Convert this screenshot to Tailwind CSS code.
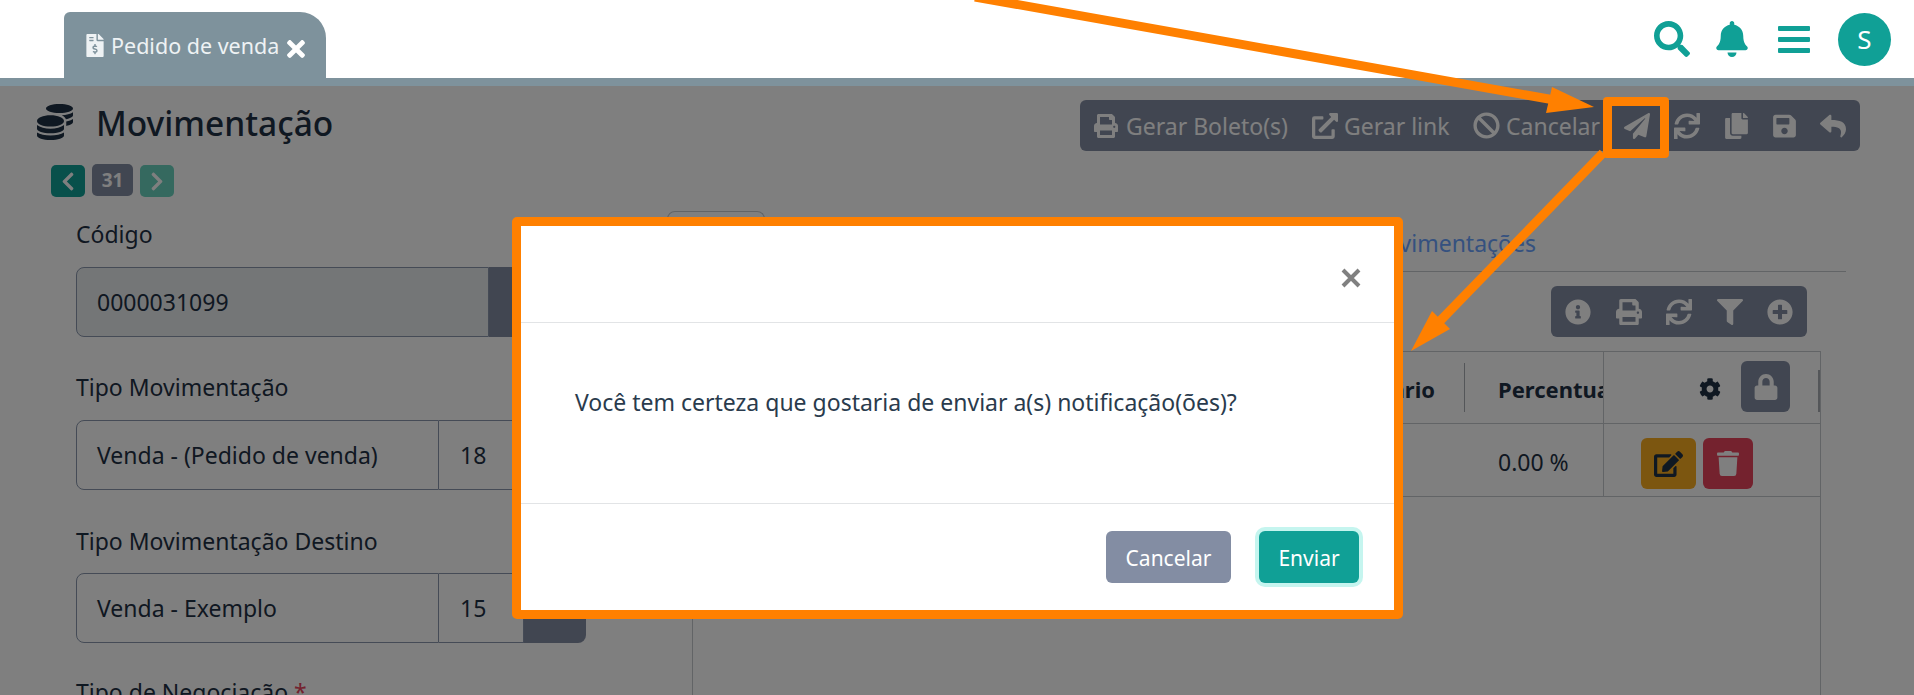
<!DOCTYPE html>
<html lang="pt-BR">

<head>
    <meta charset="UTF-8">
    <meta name="viewport" content="width=device-width, initial-scale=1.0">
    <title>Pedido de venda</title>
    <script src="https://cdn.jsdelivr.net/npm/@tailwindcss/browser@4"></script>
</head>

<body class="relative w-[1914px] h-[695px] overflow-hidden bg-white font-['Noto_Sans',sans-serif] text-[#1f3044]">

    <!-- Topo -->
    <header class="flex justify-between h-[78px] pl-[64px] pr-[23px]">
        <div class="flex items-center gap-[7px] w-[262px] h-[66px] mt-[12px] pl-[22px] pt-[3px] bg-[#7e929c] rounded-tl-[6px] rounded-tr-[26px] text-[#eef2f4] text-[21.5px]">
            <svg class="w-[18px] h-[23px] fill-current -mt-[2px]" viewBox="0 0 384 512"><path d="M377 105L279.1 7c-4.5-4.5-10.6-7-17-7H256v128h128v-6.1c0-6.3-2.5-12.4-7-16.9zm-153 31V0H24C10.7 0 0 10.7 0 24v464c0 13.3 10.7 24 24 24h336c13.3 0 24-10.7 24-24V160H248c-13.2 0-24-10.8-24-24zM64 72c0-4.42 3.58-8 8-8h80c4.42 0 8 3.58 8 8v16c0 4.42-3.58 8-8 8H72c-4.42 0-8-3.58-8-8V72zm0 80v-16c0-4.42 3.58-8 8-8h80c4.42 0 8 3.58 8 8v16c0 4.42-3.58 8-8 8H72c-4.42 0-8-3.58-8-8zm144 263.88V440c0 4.42-3.58 8-8 8h-16c-4.42 0-8-3.58-8-8v-24.29c-11.29-.58-22.27-4.52-31.37-11.35-3.9-2.93-4.1-8.77-.57-12.14l11.75-11.21c2.77-2.64 6.89-2.76 10.13-.73 3.87 2.42 8.26 3.72 12.82 3.72h28.11c6.5 0 11.8-5.92 11.8-13.19 0-5.95-3.61-11.19-8.77-12.73l-45-13.5c-18.59-5.58-31.58-23.42-31.58-43.39 0-24.52 19.05-44.44 42.67-45.07V232c0-4.42 3.58-8 8-8h16c4.42 0 8 3.58 8 8v24.29c11.29.58 22.27 4.51 31.37 11.35 3.9 2.93 4.1 8.77.57 12.14l-11.75 11.21c-2.77 2.64-6.89 2.76-10.13.73-3.87-2.43-8.26-3.72-12.82-3.72h-28.11c-6.5 0-11.8 5.92-11.8 13.19 0 5.95 3.61 11.19 8.77 12.73l45 13.5c18.59 5.58 31.58 23.42 31.58 43.39 0 24.53-19.05 44.44-42.67 45.07z"/></svg>
            <span class="whitespace-nowrap">Pedido de venda</span>
            <svg class="w-[20px] h-[26px] mt-[4px] fill-white" viewBox="0 0 352 512"><path d="M242.72 256l100.07-100.07c12.28-12.28 12.28-32.19 0-44.48l-22.24-22.24c-12.28-12.28-32.19-12.28-44.48 0L176 189.28 75.93 89.21c-12.28-12.28-32.19-12.28-44.48 0L9.21 111.45c-12.28 12.28-12.28 32.19 0 44.48L109.28 256 9.21 356.07c-12.28 12.28-12.28 32.19 0 44.48l22.24 22.24c12.28 12.28 32.2 12.28 44.48 0L176 322.72l100.07 100.07c12.28 12.28 32.2 12.28 44.48 0l22.24-22.24c12.28-12.28 12.28-32.19 0-44.48L242.72 256z"/></svg>
        </div>
        <div class="flex items-center h-[78px] text-[#10a096]">
            <svg class="w-[36px] h-[36px] fill-current" viewBox="0 0 512 512"><path d="M505 442.7L405.3 343c-4.5-4.5-10.6-7-17-7H372c27.6-35.3 44-79.7 44-128C416 93.1 322.9 0 208 0S0 93.1 0 208s93.1 208 208 208c48.3 0 92.7-16.4 128-44v16.3c0 6.4 2.5 12.5 7 17l99.7 99.7c9.4 9.4 24.6 9.4 33.9 0l28.3-28.3c9.4-9.4 9.4-24.6.1-34zM208 336c-70.7 0-128-57.2-128-128 0-70.7 57.2-128 128-128 70.7 0 128 57.2 128 128 0 70.7-57.2 128-128 128z"/></svg>
            <svg class="w-[32px] h-[36px] ml-[26px] fill-current" viewBox="0 0 448 512"><path d="M224 512c35.32 0 63.97-28.65 63.97-64H160.03c0 35.35 28.65 64 63.97 64zm215.39-149.71c-19.32-20.76-55.47-51.99-55.47-154.29 0-77.7-54.48-139.9-127.94-155.16V32c0-17.67-14.32-32-31.98-32s-31.98 14.33-31.98 32v20.84C118.56 68.1 64.08 130.3 64.08 208c0 102.3-36.15 133.53-55.47 154.29-6 6.45-8.66 14.16-8.61 21.71.11 16.4 12.98 32 32.1 32h383.8c19.12 0 32-15.6 32.1-32 .05-7.55-2.61-15.27-8.61-21.71z"/></svg>
            <div class="flex flex-col gap-[6px] w-[32px] ml-[30px]">
                <div class="h-[5px] bg-current rounded-[1px]"></div>
                <div class="h-[5px] bg-current rounded-[1px]"></div>
                <div class="h-[5px] bg-current rounded-[1px]"></div>
            </div>
            <div class="flex items-center justify-center w-[53px] h-[53px] ml-[28px] rounded-full bg-[#10a096] text-white text-[26px]">S</div>
        </div>
    </header>
    <div class="h-[8px] bg-[#7e929c]"></div>

    <main class="relative h-[609px] overflow-hidden">
        <!-- Titulo + acoes -->
        <div class="flex justify-between h-[65px] pl-[37px] pr-[54px]">
            <div class="flex items-start">
                <svg class="w-[36px] h-[36px] mt-[18px] fill-[#1f3044]" viewBox="0 0 512 512"><path d="M0 405.3V448c0 35.3 86 64 192 64s192-28.7 192-64v-42.7C342.7 434.4 267.2 448 192 448S41.3 434.4 0 405.3zM320 128c106 0 192-28.7 192-64S426 0 320 0 128 28.7 128 64s86 64 192 64zM0 300.4V352c0 35.3 86 64 192 64s192-28.7 192-64v-51.6c-41.3 34-116.9 51.6-192 51.6S41.3 334.4 0 300.4zm416 11c57.3-11.1 96-31.7 96-55.4v-42.7c-23.2 16.4-57.3 27.6-96 34.5v63.6zM192 160C86 160 0 195.8 0 240s86 80 192 80 192-35.8 192-80-86-80-192-80zm219.3 56.3c60-10.8 100.7-32 100.7-56.3v-42.7c-35.5 25.1-96.5 38.6-160.7 41.8 29.5 14.3 51.2 33.5 60 57.2z"/></svg>
                <h1 class="ml-[23px] mt-[15px] text-[33.5px] leading-[44px] font-medium">Movimentação</h1>
            </div>
            <div class="flex items-center w-[780px] h-[51px] mt-[14px] pl-[14px] rounded-[6px] bg-[#838da3] text-white text-[23px] whitespace-nowrap">
                <svg class="w-[24px] h-[24px] fill-current" viewBox="0 0 512 512"><path d="M448 192V77.25c0-8.49-3.37-16.62-9.37-22.63L393.37 9.37c-6-6-14.14-9.37-22.63-9.37H96C78.33 0 64 14.33 64 32v160c-35.35 0-64 28.65-64 64v112c0 8.84 7.16 16 16 16h48v96c0 17.67 14.33 32 32 32h320c17.67 0 32-14.33 32-32v-96h48c8.84 0 16-7.16 16-16V256c0-35.35-28.65-64-64-64zm-64 256H128v-96h256v96zm0-224H128V64h192v48c0 8.84 7.16 16 16 16h48v96zm48 72c-13.25 0-24-10.75-24-24 0-13.26 10.75-24 24-24s24 10.74 24 24c0 13.25-10.75 24-24 24z"/></svg>
                <span class="w-[160px] ml-[8px] pt-[2px]">Gerar Boleto(s)</span>
                <svg class="w-[26px] h-[26px] ml-[26px] fill-current" viewBox="0 0 512 512"><path d="M432 320h-32a16 16 0 0 0-16 16v112H64V128h144a16 16 0 0 0 16-16V80a16 16 0 0 0-16-16H48a48 48 0 0 0-48 48v352a48 48 0 0 0 48 48h352a48 48 0 0 0 48-48V336a16 16 0 0 0-16-16zM488 0H360c-21.37 0-32.05 25.91-17 41l35.73 35.73L135 320.37a24 24 0 0 0 0 34L157.67 377a24 24 0 0 0 34 0l243.61-243.68L471 169c15 15 41 4.5 41-17V24a24 24 0 0 0-24-24z"/></svg>
                <span class="w-[104px] ml-[6px] pt-[2px]">Gerar link</span>
                <svg class="w-[27px] h-[27px] ml-[25px] fill-current" viewBox="0 0 512 512"><path d="M256 8C119.034 8 8 119.033 8 256s111.034 248 248 248 248-111.034 248-248S392.967 8 256 8zm130.108 117.892c65.448 65.448 70 165.481 20.677 235.637L150.47 105.216c70.204-49.356 170.226-44.735 235.638 20.676zM125.892 386.108c-65.448-65.448-70-165.481-20.677-235.637L361.53 406.784c-70.203 49.356-170.226 44.736-235.638-20.676z"/></svg>
                <span class="w-[92px] ml-[6px] pt-[2px]">Cancelar</span>
                <svg class="w-[26px] h-[26px] ml-[26px] fill-current" viewBox="0 0 512 512"><path d="M476 3.2L12.5 270.6c-18.1 10.4-15.8 35.6 2.2 43.2L121 358.4l287.3-253.2c5.5-4.9 13.3 2.6 8.6 8.3L176 407v80.5c0 23.6 28.5 32.9 42.5 15.8L282 426l124.6 52.2c14.2 6 30.4-2.9 33-18.2l72-432C515 7.8 493.3-6.8 476 3.2z"/></svg>
                <svg class="w-[26px] h-[26px] ml-[24px] fill-current" viewBox="0 0 512 512"><path d="M440.65 12.57l4 82.77A247.16 247.16 0 0 0 255.83 8C134.73 8 33.91 94.92 12.29 209.82A12 12 0 0 0 24.09 224h49.05a12 12 0 0 0 11.67-9.26 175.91 175.91 0 0 1 317-56.94l-101.46-4.86a12 12 0 0 0-12.57 12v47.41a12 12 0 0 0 12 12H500a12 12 0 0 0 12-12V12a12 12 0 0 0-12-12h-47.37a12 12 0 0 0-11.98 12.57zM255.83 432a175.61 175.61 0 0 1-146-77.8l101.8 4.87a12 12 0 0 0 12.57-12v-47.4a12 12 0 0 0-12-12H12a12 12 0 0 0-12 12V500a12 12 0 0 0 12 12h47.35a12 12 0 0 0 12-12.6l-4.15-82.57A247.17 247.17 0 0 0 255.83 504c121.11 0 221.93-86.92 243.55-201.82a12 12 0 0 0-11.8-14.18h-49.05a12 12 0 0 0-11.67 9.26A175.86 175.86 0 0 1 255.83 432z"/></svg>
                <svg class="w-[23px] h-[26px] ml-[25px] fill-current" viewBox="0 0 448 512"><path d="M320 448v40c0 13.255-10.745 24-24 24H24c-13.255 0-24-10.745-24-24V120c0-13.255 10.745-24 24-24h72v296c0 30.879 25.121 56 56 56h168zm0-344V0H152c-13.255 0-24 10.745-24 24v368c0 13.255 10.745 24 24 24h272c13.255 0 24-10.745 24-24V128H344c-13.2 0-24-10.8-24-24zm120.971-31.029L375.029 7.029A24 24 0 0 0 358.059 0H352v96h96v-6.059a24 24 0 0 0-7.029-16.97z"/></svg>
                <svg class="w-[23px] h-[26px] ml-[25px] fill-current" viewBox="0 0 448 512"><path d="M433.941 129.941l-83.882-83.882A48 48 0 0 0 316.118 32H48C21.49 32 0 53.49 0 80v352c0 26.51 21.49 48 48 48h352c26.51 0 48-21.49 48-48V163.882a48 48 0 0 0-14.059-33.941zM224 416c-35.346 0-64-28.654-64-64 0-35.346 28.654-64 64-64s64 28.654 64 64c0 35.346-28.654 64-64 64zm96-304.52V212c0 6.627-5.373 12-12 12H76c-6.627 0-12-5.373-12-12V108c0-6.627 5.373-12 12-12h228.52c3.183 0 6.235 1.264 8.485 3.515l3.48 3.48A11.996 11.996 0 0 1 320 111.48z"/></svg>
                <svg class="w-[26px] h-[26px] ml-[24px] fill-current" viewBox="0 0 512 512"><path d="M8.309 189.836L184.313 37.851C199.719 24.546 224 35.347 224 56.015v80.053c160.629 1.839 288 34.032 288 186.258 0 61.441-39.581 122.309-83.333 154.132-13.653 9.931-33.111-2.533-28.077-18.631 45.344-145.012-21.507-183.51-176.59-185.742V360c0 20.7-24.3 31.453-39.687 18.164l-176.004-152c-11.071-9.562-11.086-26.753 0-36.328z"/></svg>
            </div>
        </div>

        <!-- Paginacao -->
        <div class="flex items-start gap-[7px] h-[46px] pt-[13px] pl-[51px] text-white">
            <div class="flex items-center justify-center w-[34px] h-[32px] mt-[1px] rounded-[5px] bg-[#10a096]">
                <svg class="w-[16px] h-[21px] fill-current" viewBox="0 0 320 512"><path d="M34.52 239.03L228.87 44.69c9.37-9.37 24.57-9.37 33.94 0l22.67 22.67c9.36 9.36 9.37 24.52.04 33.9L131.49 256l154.02 154.75c9.34 9.38 9.32 24.54-.04 33.9l-22.67 22.67c-9.37 9.37-24.57 9.37-33.94 0L34.52 272.97c-9.37-9.37-9.37-24.57 0-33.94z"/></svg>
            </div>
            <div class="flex items-center justify-center w-[41px] h-[32px] rounded-[5px] bg-[#838da3] text-[19px] font-bold">31</div>
            <div class="flex items-center justify-center w-[34px] h-[32px] mt-[1px] rounded-[5px] bg-[#6ad2be]">
                <svg class="w-[16px] h-[21px] fill-current" viewBox="0 0 320 512"><path d="M285.476 272.971L91.132 467.314c-9.373 9.373-24.569 9.373-33.941 0l-22.667-22.667c-9.357-9.357-9.375-24.522-.04-33.901L188.505 256 34.484 101.255c-9.335-9.379-9.317-24.544.04-33.901l22.667-22.667c9.373-9.373 24.569-9.373 33.941 0L285.475 239.03c9.373 9.372 9.373 24.568.001 33.941z"/></svg>
            </div>
        </div>

        <div class="flex">
            <!-- Formulario -->
            <div class="w-[667px] pl-[76px] pt-[24px] text-[23px] shrink-0">
                <div class="mb-[36px]">
                    <label class="block h-[30px] mb-[16px] leading-[27px]">Código</label>
                    <div class="flex w-[510px] h-[70px]">
                        <div class="flex items-center w-[413px] pl-[20px] border border-[#8a97ad] rounded-l-[8px] bg-[#e9ecef]">0000031099</div>
                        <div class="flex-1 rounded-r-[8px] bg-[#838da3]"></div>
                    </div>
                </div>
                <div class="mb-[36px]">
                    <label class="block h-[30px] mb-[17px] leading-[28px]">Tipo Movimentação</label>
                    <div class="flex w-[510px] h-[70px]">
                        <div class="flex items-center w-[363px] pl-[20px] border border-[#8a97ad] rounded-l-[8px]">Venda - (Pedido de venda)</div>
                        <div class="flex items-center w-[85px] pl-[21px] border-y border-r border-[#8a97ad]">18</div>
                        <div class="flex-1 rounded-r-[8px] bg-[#838da3]"></div>
                    </div>
                </div>
                <div class="mb-[36px]">
                    <label class="block h-[30px] mb-[17px] leading-[30px]">Tipo Movimentação Destino</label>
                    <div class="flex w-[510px] h-[70px]">
                        <div class="flex items-center w-[363px] pl-[20px] border border-[#8a97ad] rounded-l-[8px]">Venda - Exemplo</div>
                        <div class="flex items-center w-[85px] pl-[21px] border-y border-r border-[#8a97ad]">15</div>
                        <div class="flex-1 rounded-r-[8px] bg-[#838da3]"></div>
                    </div>
                </div>
                <label class="block h-[30px] leading-[26px]">Tipo de Negociação <span class="text-[#e8445c]">*</span></label>
            </div>

            <!-- Abas + tabela -->
            <div class="w-[1179px] pt-[15px]">
                <div class="flex items-end justify-between h-[60px] pr-[310px] border-b border-[#c4c8cc]">
                    <div class="w-[98px] h-[60px] border border-b-0 border-[#c4c8cc] rounded-t-[8px]"></div>
                    <a class="pb-[11px] text-[23px] text-[#6aa3ff]" href="#">Movimentações</a>
                </div>
                <div class="flex justify-end pr-[39px] mt-[14px]">
                    <div class="flex items-center justify-between w-[256px] h-[51px] px-[14px] rounded-[6px] bg-[#838da3] text-white">
                        <svg class="w-[26px] h-[26px] fill-current" viewBox="0 0 512 512"><path d="M256 8C119.043 8 8 119.083 8 256c0 136.997 111.043 248 248 248s248-111.003 248-248C504 119.083 392.957 8 256 8zm0 110c23.196 0 42 18.804 42 42s-18.804 42-42 42-42-18.804-42-42 18.804-42 42-42zm56 254c0 6.627-5.373 12-12 12h-88c-6.627 0-12-5.373-12-12v-24c0-6.627 5.373-12 12-12h12v-64h-12c-6.627 0-12-5.373-12-12v-24c0-6.627 5.373-12 12-12h64c6.627 0 12 5.373 12 12v100h12c6.627 0 12 5.373 12 12v24z"/></svg>
                        <svg class="w-[26px] h-[26px] fill-current" viewBox="0 0 512 512"><path d="M448 192V77.25c0-8.49-3.37-16.62-9.37-22.63L393.37 9.37c-6-6-14.14-9.37-22.63-9.37H96C78.33 0 64 14.33 64 32v160c-35.35 0-64 28.65-64 64v112c0 8.84 7.16 16 16 16h48v96c0 17.67 14.33 32 32 32h320c17.67 0 32-14.33 32-32v-96h48c8.84 0 16-7.16 16-16V256c0-35.35-28.65-64-64-64zm-64 256H128v-96h256v96zm0-224H128V64h192v48c0 8.84 7.16 16 16 16h48v96zm48 72c-13.25 0-24-10.75-24-24 0-13.26 10.75-24 24-24s24 10.74 24 24c0 13.25-10.75 24-24 24z"/></svg>
                        <svg class="w-[26px] h-[26px] fill-current" viewBox="0 0 512 512"><path d="M440.65 12.57l4 82.77A247.16 247.16 0 0 0 255.83 8C134.73 8 33.91 94.92 12.29 209.82A12 12 0 0 0 24.09 224h49.05a12 12 0 0 0 11.67-9.26 175.91 175.91 0 0 1 317-56.94l-101.46-4.86a12 12 0 0 0-12.57 12v47.41a12 12 0 0 0 12 12H500a12 12 0 0 0 12-12V12a12 12 0 0 0-12-12h-47.37a12 12 0 0 0-11.98 12.57zM255.83 432a175.61 175.61 0 0 1-146-77.8l101.8 4.87a12 12 0 0 0 12.57-12v-47.4a12 12 0 0 0-12-12H12a12 12 0 0 0-12 12V500a12 12 0 0 0 12 12h47.35a12 12 0 0 0 12-12.6l-4.15-82.57A247.17 247.17 0 0 0 255.83 504c121.11 0 221.93-86.92 243.55-201.82a12 12 0 0 0-11.8-14.18h-49.05a12 12 0 0 0-11.67 9.26A175.86 175.86 0 0 1 255.83 432z"/></svg>
                        <svg class="w-[26px] h-[26px] fill-current" viewBox="0 0 512 512"><path d="M487.976 0H24.028C2.71 0-8.047 25.866 7.058 40.971L192 225.941V432c0 7.831 3.821 15.17 10.237 19.662l80 55.98C298.02 518.69 320 507.493 320 487.98V225.941l184.947-184.97C520.021 25.896 509.338 0 487.976 0z"/></svg>
                        <svg class="w-[26px] h-[26px] fill-current" viewBox="0 0 512 512"><path d="M256 8C119 8 8 119 8 256s111 248 248 248 248-111 248-248S393 8 256 8zm144 276c0 6.6-5.4 12-12 12h-92v92c0 6.6-5.4 12-12 12h-56c-6.6 0-12-5.4-12-12v-92h-92c-6.6 0-12-5.4-12-12v-56c0-6.6 5.4-12 12-12h92v-92c0-6.6 5.4-12 12-12h56c6.6 0 12 5.4 12 12v92h92c6.6 0 12 5.4 12 12v56z"/></svg>
                    </div>
                </div>
                <div class="w-[1129px] h-[400px] ml-[25px] mt-[14px] border-x border-t border-[#c4c8cc] text-[23px]">
                    <div class="grid grid-cols-[771px_139px_217px] h-[72px] border-b border-[#c4c8cc] font-bold">
                        <div class="flex items-center justify-end pr-[29px] pt-[4px] text-[22px]">Valor Unitário</div>
                        <div class="relative flex items-center pl-[34px] pt-[4px] overflow-hidden whitespace-nowrap text-[22px]">
                            <div class="absolute left-0 top-[11px] h-[49px] border-l border-[#a9adb2]"></div>Percentual
                        </div>
                        <div class="relative flex items-center pl-[95px] border-l border-[#c4c8cc]">
                            <svg class="w-[22px] h-[22px] fill-[#1f3044] mt-[2px]" viewBox="0 0 512 512"><path d="M487.4 315.7l-42.6-24.6c4.3-23.2 4.3-47 0-70.2l42.6-24.6c4.9-2.8 7.1-8.6 5.5-14-11.1-35.6-30-67.8-54.7-94.6-3.8-4.1-10-5.1-14.8-2.3L380.8 110c-17.9-15.4-38.5-27.3-60.8-35.1V25.8c0-5.6-3.9-10.5-9.4-11.7-36.7-8.2-74.3-7.8-109.2 0-5.5 1.2-9.4 6.1-9.4 11.7V75c-22.2 7.9-42.8 19.8-60.8 35.1L88.7 85.5c-4.9-2.8-11-1.9-14.8 2.3-24.7 26.7-43.6 58.9-54.7 94.6-1.7 5.4.6 11.2 5.5 14L67.3 221c-4.3 23.2-4.3 47 0 70.2l-42.6 24.6c-4.9 2.8-7.1 8.6-5.5 14 11.1 35.6 30 67.8 54.7 94.6 3.8 4.1 10 5.1 14.8 2.3l42.6-24.6c17.9 15.4 38.5 27.3 60.8 35.1v49.2c0 5.6 3.9 10.5 9.4 11.7 36.7 8.2 74.3 7.8 109.2 0 5.5-1.2 9.4-6.1 9.4-11.7v-49.2c22.2-7.9 42.8-19.8 60.8-35.1l42.6 24.6c4.9 2.8 11 1.9 14.8-2.3 24.7-26.7 43.6-58.9 54.7-94.6 1.5-5.5-.7-11.3-5.6-14.1zM256 336c-44.1 0-80-35.9-80-80s35.9-80 80-80 80 35.9 80 80-35.9 80-80 80z"/></svg>
                            <div class="flex items-center justify-center w-[49px] h-[51px] ml-[20px] -mt-[2px] rounded-[6px] bg-[#838da3]">
                                <svg class="w-[24px] h-[26px] fill-white" viewBox="0 0 448 512"><path d="M400 224h-24v-72C376 68.2 307.8 0 224 0S72 68.2 72 152v72H48c-26.5 0-48 21.5-48 48v192c0 26.5 21.5 48 48 48h352c26.5 0 48-21.5 48-48V272c0-26.5-21.5-48-48-48zm-104 0H152v-72c0-39.7 32.3-72 72-72s72 32.3 72 72v72z"/></svg>
                            </div>
                            <div class="absolute right-0 top-[18px] h-[42px] border-r-2 border-[#a9adb2]"></div>
                        </div>
                    </div>
                    <div class="grid grid-cols-[771px_139px_217px] h-[73px] border-b border-[#c4c8cc]">
                        <div></div>
                        <div class="flex items-center pl-[34px] pt-[4px]">0.00 %</div>
                        <div class="flex items-center gap-[7px] pl-[37px] pt-[7px] border-l border-[#c4c8cc]">
                            <div class="flex items-center justify-center w-[55px] h-[51px] rounded-[6px] bg-[#f8ac20]">
                                <svg class="w-[29px] h-[26px] fill-[#1f3044]" viewBox="0 0 576 512"><path d="M402.6 83.2l90.2 90.2c3.8 3.8 3.8 10 0 13.8L274.4 405.6l-92.8 10.3c-12.4 1.4-22.9-9.1-21.5-21.5l10.3-92.8L388.8 83.2c3.8-3.8 10-3.8 13.8 0zm162-22.9l-48.8-48.8c-15.2-15.2-39.9-15.2-55.2 0l-35.4 35.4c-3.8 3.8-3.8 10 0 13.8l90.2 90.2c3.8 3.8 10 3.8 13.8 0l35.4-35.4c15.2-15.3 15.2-40 0-55.2zM384 346.2V448H64V128h229.8c3.2 0 6.2-1.3 8.5-3.5l40-40c7.6-7.6 2.2-20.5-8.5-20.5H48C21.5 64 0 85.5 0 112v352c0 26.5 21.5 48 48 48h352c26.5 0 48-21.5 48-48V306.2c0-10.7-12.9-16-20.5-8.5l-40 40c-2.2 2.3-3.5 5.3-3.5 8.5z"/></svg>
                            </div>
                            <div class="flex items-center justify-center w-[50px] h-[51px] rounded-[6px] bg-[#e8445c]">
                                <svg class="w-[22px] h-[25px] fill-white" viewBox="0 0 448 512"><path d="M432 32H312l-9.4-18.7A24 24 0 0 0 281.1 0H166.8a23.72 23.72 0 0 0-21.4 13.3L136 32H16A16 16 0 0 0 0 48v32a16 16 0 0 0 16 16h416a16 16 0 0 0 16-16V48a16 16 0 0 0-16-16zM53.2 467a48 48 0 0 0 47.9 45h245.8a48 48 0 0 0 47.9-45L416 128H32z"/></svg>
                            </div>
                        </div>
                    </div>
                </div>
            </div>
        </div>

        <!-- Fundo do modal -->
        <div class="absolute inset-0 bg-black/50"></div>
    </main>

    <!-- Modal -->
    <div class="absolute left-[512px] top-[217px] w-[891px] h-[402px] border-[9px] border-[#ff8000] rounded-[5px] bg-white flex flex-col text-[#2a3b4d]">
        <div class="flex justify-end items-center h-[97px] pr-[33px] pt-[7px] border-b border-[#e2e4e6]">
            <svg class="w-[20px] h-[20px] stroke-[#808080]" viewBox="0 0 20 20" fill="none" stroke-width="4"><path d="M2 2L18 18M18 2L2 18"/></svg>
        </div>
        <div class="flex items-center h-[181px] pl-[54px] pb-[21px] text-[23px] border-b border-[#e2e4e6]">
            Você tem certeza que gostaria de enviar a(s) notificação(ões)?
        </div>
        <div class="flex flex-1 items-center justify-end gap-[28px] pr-[35px] text-[21px] text-white">
            <button class="w-[125px] h-[52px] pt-[3px] rounded-[6px] bg-[#838da3]">Cancelar</button>
            <button class="w-[100px] h-[52px] pt-[3px] rounded-[6px] bg-[#10a096] ring-4 ring-[#c5f5ef]">Enviar</button>
        </div>
    </div>

    <!-- Destaque laranja -->
    <div class="absolute left-[1603px] top-[97px] w-[66px] h-[61px] border-[9px] border-[#ff8000] rounded-[4px]"></div>
    <svg class="absolute inset-0 w-[1914px] h-[695px] pointer-events-none" viewBox="0 0 1914 695">
        <path d="M975 -3L1560 101" stroke="#ff8000" stroke-width="9" fill="none"/>
        <path d="M1594 107L1552 87L1546 113Z" fill="#ff8000"/>
        <path d="M1603 153L1440 321" stroke="#ff8000" stroke-width="9" fill="none"/>
        <path d="M1411 351L1432 311L1450 329Z" fill="#ff8000"/>
    </svg>

</body>

</html>
